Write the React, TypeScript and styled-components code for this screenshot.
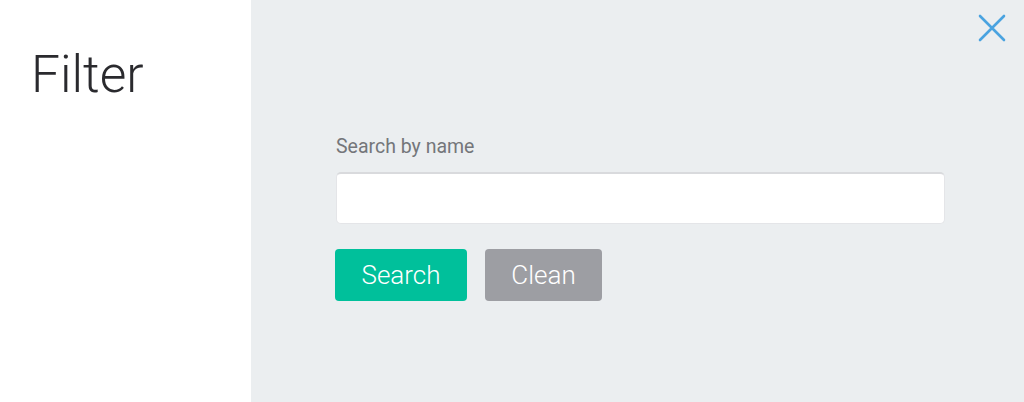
import React from "react";
import styled, { createGlobalStyle } from "styled-components";

const Global = createGlobalStyle`
  html, body { margin: 0; padding: 0; }
  body { font-family: Roboto, "Liberation Sans", sans-serif; }
`;

const Page = styled.div`
  display: flex;
  width: 1024px;
  height: 402px;
  overflow: hidden;
`;

const Side = styled.aside`
  width: 251px;
  flex: none;
  background: #ffffff;
  padding: 45px 0 0 31px;
  box-sizing: border-box;
`;

const Title = styled.h1`
  margin: 0;
  font-family: Roboto, "Liberation Sans", sans-serif;
  font-weight: 300;
  font-size: 51.5px;
  line-height: 60px;
  color: #2a2a2e;
`;

const Main = styled.main`
  position: relative;
  flex: 1;
  background: #ebeef0;
  padding: 134px 0 0 85px;
  box-sizing: border-box;
`;

const CloseButton = styled.button`
  position: absolute;
  top: 13px;
  right: 17px;
  width: 30px;
  height: 30px;
  padding: 0;
  border: none;
  background: transparent;
  display: flex;
  align-items: center;
  justify-content: center;
  cursor: pointer;
`;

const Form = styled.div`
  width: 609px;
  display: flex;
  flex-direction: column;
`;

const Label = styled.label`
  font-size: 19.5px;
  line-height: 26px;
  color: #74767a;
  margin-bottom: 12px;
`;

const Input = styled.input`
  height: 52px;
  box-sizing: border-box;
  border: 1px solid #e4e5e8;
  border-top: 2px solid #d9dadd;
  border-radius: 5px;
  background: #ffffff;
  outline: none;
  padding: 0 14px;
  font-size: 17px;
  font-family: inherit;
`;

const Actions = styled.div`
  display: flex;
  gap: 18px;
  margin-top: 25px;
  margin-left: -1px;
`;

const Button = styled.button<{ $tone: "primary" | "muted" }>`
  height: 52px;
  width: ${(p) => (p.$tone === "primary" ? "132px" : "117px")};
  border: none;
  border-radius: 4px;
  background: ${(p) => (p.$tone === "primary" ? "#00c09b" : "#9d9ea3")};
  color: #ffffff;
  font-family: Roboto, "Liberation Sans", sans-serif;
  font-weight: 300;
  font-size: 26px;
  padding: 0;
  cursor: pointer;
`;

export default function App() {
  return (
    <>
      <Global />
      <Page>
        <Side>
          <Title>Filter</Title>
        </Side>
        <Main>
          <CloseButton aria-label="Close">
            <svg width="28" height="28" viewBox="0 0 28 28">
              <path d="M2 2 L26 26 M26 2 L2 26" stroke="#4aa3e0" strokeWidth="2.6" strokeLinecap="round" />
            </svg>
          </CloseButton>
          <Form>
            <Label htmlFor="name">Search by name</Label>
            <Input id="name" />
            <Actions>
              <Button $tone="primary">Search</Button>
              <Button $tone="muted">Clean</Button>
            </Actions>
          </Form>
        </Main>
      </Page>
    </>
  );
}
